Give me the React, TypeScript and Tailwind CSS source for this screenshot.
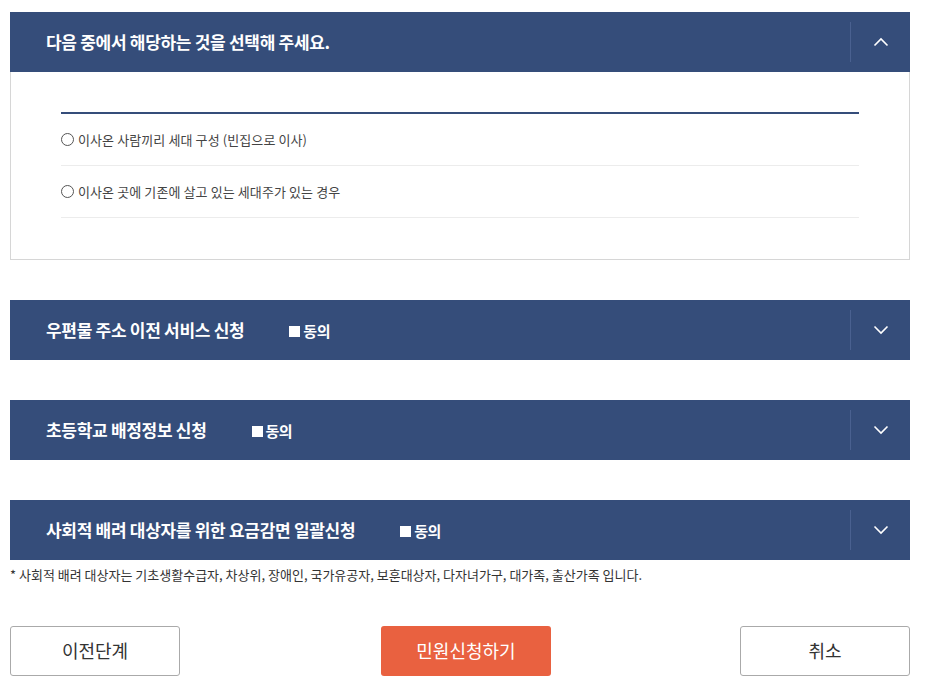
import React from 'react';

type SectionProps = {
    title: string;
    open?: boolean;
    agree?: boolean;
};

const font = { fontFamily: '"Noto Sans CJK KR", "Noto Sans", sans-serif' };

const Chevron: React.FC<{ up?: boolean }> = ({ up }) => (
    <svg width="16" height="10" viewBox="0 0 16 10" fill="none" stroke="white" strokeWidth="1.6">
        {up ? <path d="M1.5 8.5 L8 2 L14.5 8.5" /> : <path d="M1.5 1.5 L8 8 L14.5 1.5" />}
    </svg>
);

const SectionHeader: React.FC<SectionProps> = ({ title, open, agree }) => (
    <div className="flex items-center h-[60px] bg-[#354d7a] text-white">
        <div className="flex flex-1 items-center pl-9">
            <span className="text-[17px] font-bold tracking-[-0.3px]">{title}</span>
            {agree && (
                <span className="ml-[45px] mt-[3px] flex items-center text-[15px] font-bold tracking-[-0.5px]">
                    <span className="inline-block w-[11px] h-[11px] bg-white mr-[3px]" />
                    동의
                </span>
            )}
        </div>
        <div className="w-px h-[40px] bg-[#4a6190]" />
        <div className="w-[59px] flex justify-center items-center">
            <Chevron up={open} />
        </div>
    </div>
);

const options = [
    '이사온 사람끼리 세대 구성 (빈집으로 이사)',
    '이사온 곳에 기존에 살고 있는 세대주가 있는 경우',
];

export default function App() {
    return (
        <div className="bg-white w-[930px] h-[690px] pt-3" style={font}>
            <div className="w-[900px] ml-[10px]">
                <SectionHeader title="다음 중에서 해당하는 것을 선택해 주세요." open />
                <div className="border border-t-0 border-[#d6d6d6] px-[50px] pt-10 pb-[41px]">
                    <div className="border-t-2 border-[#354d7a]">
                        {options.map((o) => (
                            <div key={o} className="flex items-center h-[52px] border-b border-[#ececec] text-[13px] text-[#444] tracking-[0.1px]">
                                <span className="inline-block w-[13px] h-[13px] rounded-full border border-[#555] mr-[4px]" />
                                {o}
                            </div>
                        ))}
                    </div>
                </div>

                <div className="mt-10">
                    <SectionHeader title="우편물 주소 이전 서비스 신청" agree />
                </div>
                <div className="mt-10">
                    <SectionHeader title="초등학교 배정정보 신청" agree />
                </div>
                <div className="mt-10">
                    <SectionHeader title="사회적 배려 대상자를 위한 요금감면 일괄신청" agree />
                </div>
                <p className="mt-[5px] text-[13px] text-[#333]">
                    * 사회적 배려 대상자는 기초생활수급자, 차상위, 장애인, 국가유공자, 보훈대상자, 다자녀가구, 대가족, 출산가족 입니다.
                </p>

                <div className="flex mt-[41px]">
                    <button className="w-[170px] h-[50px] border border-[#aaa] rounded-[3px] bg-white text-[18px] text-[#333]">이전단계</button>
                    <button className="ml-[201px] w-[170px] h-[50px] rounded-[3px] bg-[#e96140] text-[18px] text-white">민원신청하기</button>
                    <button className="ml-auto w-[170px] h-[50px] border border-[#aaa] rounded-[3px] bg-white text-[18px] text-[#333]">취소</button>
                </div>
            </div>
        </div>
    );
}
